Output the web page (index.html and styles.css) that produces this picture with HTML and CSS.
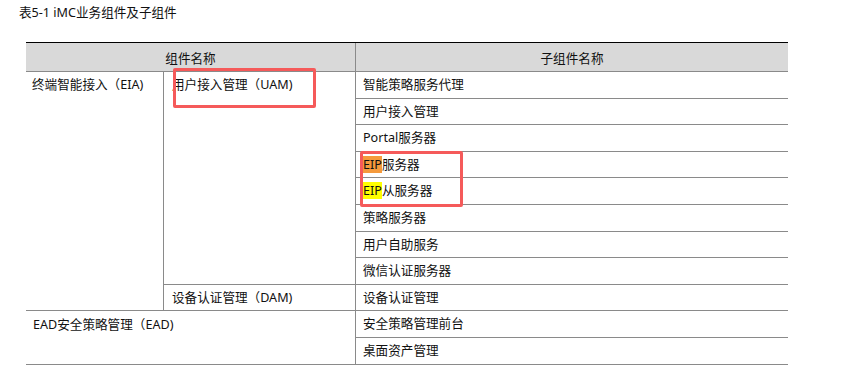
FILE: index.html
```html
<!DOCTYPE html>
<html lang="zh-CN">
<head>
<meta charset="utf-8">
<title>表5-1 iMC业务组件及子组件</title>
<link rel="stylesheet" href="styles.css">
</head>
<body>
<div class="page">
  <div class="caption">表5-1 iMC业务组件及子组件</div>
  <div class="table-wrap">
    <div class="grid">
      <div class="th th-left">组件名称</div>
      <div class="th th-right">子组件名称</div>

      <div class="td c1 eia">终端智能接入（EIA)</div>
      <div class="td c2 uam">用户接入管理（UAM)</div>
      <div class="td c3 r1">智能策略服务代理</div>
      <div class="td c3 r2">用户接入管理</div>
      <div class="td c3 r3">Portal服务器</div>
      <div class="td c3 r4"><span class="hl-orange">EIP</span>服务器</div>
      <div class="td c3 r5"><span class="hl-yellow">EIP</span>从服务器</div>
      <div class="td c3 r6">策略服务器</div>
      <div class="td c3 r7">用户自助服务</div>
      <div class="td c3 r8">微信认证服务器</div>
      <div class="td c2 dam">设备认证管理（DAM)</div>
      <div class="td c3 r9">设备认证管理</div>
      <div class="td c12 ead">EAD安全策略管理（EAD)</div>
      <div class="td c3 r10">安全策略管理前台</div>
      <div class="td c3 r11">桌面资产管理</div>
    </div>
    <div class="mark mark-uam"></div>
    <div class="mark mark-eip"></div>
  </div>
</div>
</body>
</html>
```

FILE: styles.css
```css
html, body {
  margin: 0;
  padding: 0;
  background: #ffffff;
}

body {
  font-family: "Noto Sans", "Noto Sans CJK SC", sans-serif;
  color: #111111;
}

.page {
  width: 848px;
  height: 378px;
  overflow: hidden;
}

.caption {
  font-size: 12.6px;
  line-height: 16px;
  padding: 5px 0 0 19px;
  height: 21px;
}

.table-wrap {
  position: relative;
  margin: 16px 0 0 26px;
  width: 762px;
}

.grid {
  display: grid;
  grid-template-columns: 138px 192px 432px;
  grid-template-rows: 29px repeat(11, 26.6px);
  border-top: 1.5px solid #000000;
  font-size: 12.6px;
}

.th {
  background: #d9d9d9;
  border-bottom: 1px solid #8a8a8a;
  display: flex;
  align-items: center;
  justify-content: center;
  box-sizing: border-box;
}

.th-left {
  grid-column: 1 / 3;
  grid-row: 1;
  border-right: 1px solid #8a8a8a;
}

.th-right {
  grid-column: 3;
  grid-row: 1;
}

.td {
  box-sizing: border-box;
  border-bottom: 1px solid #8a8a8a;
  line-height: 25.6px;
  padding-left: 7px;
  white-space: nowrap;
}

.c1 { grid-column: 1; border-right: 1px solid #8a8a8a; padding-left: 6px; }
.c2 { grid-column: 2; border-right: 1px solid #8a8a8a; padding-left: 8px; }
.c3 { grid-column: 3; }
.c12 { grid-column: 1 / 3; border-right: 1px solid #8a8a8a; }

.eia { grid-row: 2 / 11; }
.uam { grid-row: 2 / 10; }
.dam { grid-row: 10; }
.ead { grid-row: 11 / 13; padding-top: 1px; }

.r1 { grid-row: 2; }
.r2 { grid-row: 3; }
.r3 { grid-row: 4; }
.r4 { grid-row: 5; }
.r5 { grid-row: 6; }
.r6 { grid-row: 7; }
.r7 { grid-row: 8; }
.r8 { grid-row: 9; }
.r9 { grid-row: 10; }
.r10 { grid-row: 11; }
.r11 { grid-row: 12; }

.hl-orange {
  background: #f59a3c;
}

.hl-yellow {
  background: #ffff00;
}

.mark {
  position: absolute;
  border: 3px solid #f55a5a;
  border-radius: 2px;
  box-sizing: border-box;
}

.mark-uam {
  left: 147px;
  top: 26px;
  width: 143px;
  height: 40px;
}

.mark-eip {
  left: 334px;
  top: 109px;
  width: 103px;
  height: 56px;
}
```
